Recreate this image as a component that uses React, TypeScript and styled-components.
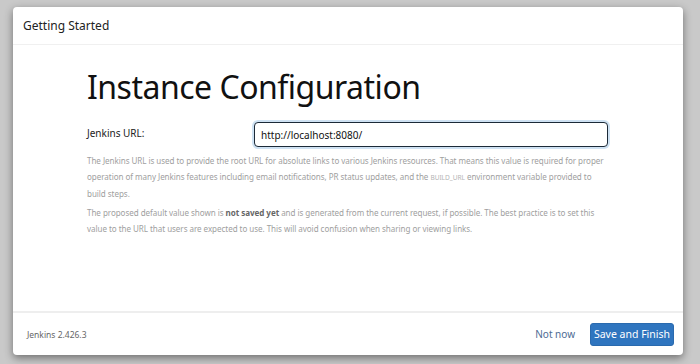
import styled, { createGlobalStyle } from 'styled-components'

const GlobalStyle = createGlobalStyle`
	html, body {
		margin: 0;
		padding: 0;
		background: #c9c9c9;
		font-family: "Noto Sans", "Open Sans", sans-serif;
	}
`

export default function App() {
	return (
		<>
			<GlobalStyle />
			<Page>
				<Dialog>
					<Header>Getting Started</Header>
					<Body>
						<Title>Instance Configuration</Title>
						<FieldRow>
							<Label>Jenkins URL:</Label>
							<UrlInput defaultValue={'http://localhost:8080/'} />
						</FieldRow>
						<Help>
							The Jenkins URL is used to provide the root URL for absolute links to various Jenkins resources. That means this value is required for proper operation of many Jenkins features including email notifications, PR status updates, and the <Code>BUILD_URL</Code> environment variable provided to build steps.
						</Help>
						<Help>
							The proposed default value shown is <strong>not saved yet</strong> and is generated from the current request, if possible. The best practice is to set this value to the URL that users are expected to use. This will avoid confusion when sharing or viewing links.
						</Help>
					</Body>
					<Footer>
						<Version>Jenkins 2.426.3</Version>
						<Actions>
							<LinkButton>Not now</LinkButton>
							<PrimaryButton>Save and Finish</PrimaryButton>
						</Actions>
					</Footer>
				</Dialog>
			</Page>
		</>
	)
}

const Page = styled.div`
	width: 700px;
	height: 364px;
	padding: 7px 17px 0 13px;
	box-sizing: border-box;
`

const Dialog = styled.div`
	width: 670px;
	height: 348px;
	background: #fff;
	border-radius: 4px;
	box-shadow: 0 3px 9px rgba(0, 0, 0, 0.45);
	display: flex;
	flex-direction: column;
	overflow: hidden;
`

const Header = styled.div`
	height: 37px;
	padding: 0 10px;
	display: flex;
	align-items: center;
	font-size: 12px;
	color: #222;
	border-bottom: 1px solid #f0f0f0;
`

const Body = styled.div`
	flex: 1;
	padding: 22px 75px 0 74px;
`

const Title = styled.h1`
	margin: 0 0 15px;
	font-size: 32px;
	letter-spacing: -0.5px;
	font-weight: 400;
	color: #111;
	line-height: 40px;
`

const FieldRow = styled.div`
	display: grid;
	grid-template-columns: 167px 1fr;
	align-items: center;
	margin-bottom: 6px;
`

const Label = styled.label`
	font-size: 10px;
	color: #222;
	align-self: start;
	padding-top: 4px;
`

const UrlInput = styled.input`
	height: 25px;
	box-sizing: border-box;
	border: 1.5px solid #1c2a38;
	border-radius: 4px;
	box-shadow: 0 0 0 2px #cfe2f3;
	padding: 0 6px;
	font-family: "Noto Sans", sans-serif;
	font-size: 10px;
	color: #111;
	outline: none;
`

const Help = styled.p`
	margin: 0 0 3px;
	font-size: 8.05px;
	letter-spacing: -0.05px;
	line-height: 16px;
	color: #a0a0a0;
	strong {
		color: #666;
		font-weight: 700;
	}
`

const Code = styled.code`
	font-family: "Noto Sans", sans-serif;
	font-size: 6.6px;
	color: #b4b4b4;
`

const Footer = styled.div`
	height: 42px;
	border-top: 2px solid #eeeeee;
	display: flex;
	align-items: center;
	justify-content: space-between;
	padding: 0 9px 0 14px;
`

const Version = styled.span`
	font-size: 8.5px;
	color: #666;
`

const Actions = styled.div`
	display: flex;
	align-items: center;
	gap: 15px;
`

const LinkButton = styled.button`
	background: none;
	border: none;
	padding: 0;
	font-family: "Noto Sans", sans-serif;
	font-size: 10px;
	color: #4d6b93;
	cursor: pointer;
`

const PrimaryButton = styled.button`
	width: 84px;
	height: 23px;
	background: #2f75bf;
	border: 1px solid #2a6aae;
	border-radius: 3px;
	color: #fff;
	font-family: "Noto Sans", sans-serif;
	font-size: 10.5px;
	padding: 0;
	cursor: pointer;
`
